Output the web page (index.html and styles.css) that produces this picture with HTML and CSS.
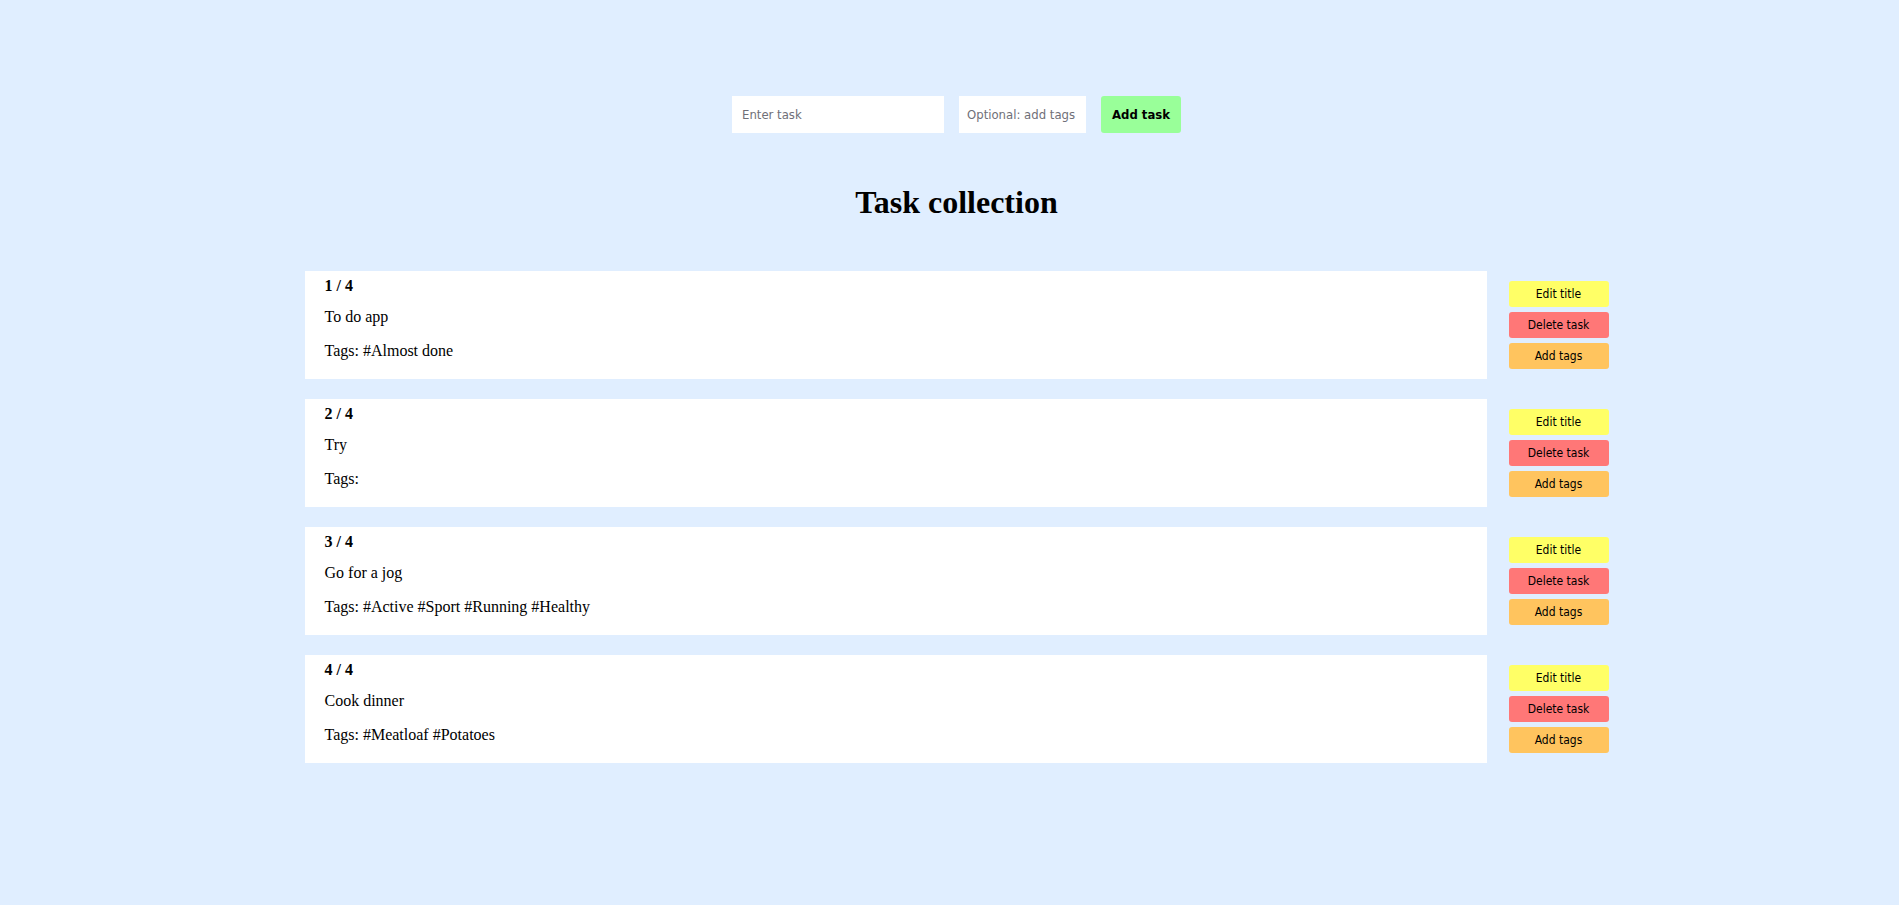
FILE: index.html
```html
<!DOCTYPE html>
<html lang="en">
<head>
<meta charset="utf-8">
<title>Task collection</title>
<link rel="stylesheet" href="styles.css">
</head>
<body>
<div class="page">
  <form class="add-form">
    <input class="task-input" type="text" placeholder="Enter task">
    <input class="tags-input" type="text" placeholder="Optional: add tags">
    <button class="add-btn" type="button">Add task</button>
  </form>

  <h1 class="title">Task collection</h1>

  <div class="list">
    <div class="row">
      <div class="card">
        <div class="num">1 / 4</div>
        <div class="name">To do app</div>
        <div class="tags">Tags: #Almost done</div>
      </div>
      <div class="actions">
        <button class="btn edit" type="button">Edit title</button>
        <button class="btn del" type="button">Delete task</button>
        <button class="btn tag" type="button">Add tags</button>
      </div>
    </div>
    <div class="row">
      <div class="card">
        <div class="num">2 / 4</div>
        <div class="name">Try</div>
        <div class="tags">Tags:</div>
      </div>
      <div class="actions">
        <button class="btn edit" type="button">Edit title</button>
        <button class="btn del" type="button">Delete task</button>
        <button class="btn tag" type="button">Add tags</button>
      </div>
    </div>
    <div class="row">
      <div class="card">
        <div class="num">3 / 4</div>
        <div class="name">Go for a jog</div>
        <div class="tags">Tags: #Active #Sport #Running #Healthy</div>
      </div>
      <div class="actions">
        <button class="btn edit" type="button">Edit title</button>
        <button class="btn del" type="button">Delete task</button>
        <button class="btn tag" type="button">Add tags</button>
      </div>
    </div>
    <div class="row">
      <div class="card">
        <div class="num">4 / 4</div>
        <div class="name">Cook dinner</div>
        <div class="tags">Tags: #Meatloaf #Potatoes</div>
      </div>
      <div class="actions">
        <button class="btn edit" type="button">Edit title</button>
        <button class="btn del" type="button">Delete task</button>
        <button class="btn tag" type="button">Add tags</button>
      </div>
    </div>
  </div>
</div>
</body>
</html>
```
FILE: styles.css
```css
html, body {
  margin: 0;
  padding: 0;
  background: #e0eeff;
}

body {
  font-family: "Liberation Serif", "Times New Roman", serif;
  color: #000;
  min-height: 905px;
}

.page {
  padding-left: 14px;
  padding-top: 96px;
  box-sizing: border-box;
}

.add-form {
  display: flex;
  justify-content: center;
  gap: 15px;
  margin: 0;
}

.task-input,
.tags-input {
  box-sizing: border-box;
  height: 37px;
  border: none;
  outline: none;
  background: #fff;
  padding: 0 10px;
  font-family: "DejaVu Sans Condensed", "DejaVu Sans", sans-serif;
  font-size: 13px;
  color: #000;
}

.task-input { width: 212px; }
.tags-input { width: 127px; padding: 0 8px; }

.task-input::placeholder,
.tags-input::placeholder {
  color: #6f6f78;
}

.add-btn {
  box-sizing: border-box;
  width: 80px;
  height: 37px;
  border: none;
  border-radius: 3px;
  background: #99ff99;
  font-family: "DejaVu Sans Condensed", "DejaVu Sans", sans-serif;
  font-weight: bold;
  font-size: 13px;
  color: #000;
  padding: 0;
}

.title {
  margin: 51px 0 0;
  text-align: center;
  font-size: 32px;
  line-height: 36px;
  font-weight: bold;
}

.list {
  margin-top: 51px;
  display: flex;
  flex-direction: column;
  align-items: center;
  gap: 20px;
}

.row {
  display: flex;
  align-items: center;
  gap: 22px;
}

.card {
  box-sizing: border-box;
  width: 1182px;
  height: 108px;
  background: #fff;
  padding: 6px 20px 0;
  font-size: 16px;
  line-height: 18px;
}

.num {
  font-weight: bold;
}

.name {
  margin-top: 13px;
}

.tags {
  margin-top: 16px;
}

.actions {
  display: flex;
  flex-direction: column;
  gap: 5px;
  width: 100px;
}

.btn {
  box-sizing: border-box;
  width: 100px;
  height: 26px;
  border: none;
  border-radius: 3px;
  padding: 0;
  font-family: "DejaVu Sans Condensed", "DejaVu Sans", sans-serif;
  font-size: 12px;
  color: #000;
}

.btn.edit { background: #ffff66; }
.btn.del { background: #ff7777; }
.btn.tag { background: #ffc45e; }
```
